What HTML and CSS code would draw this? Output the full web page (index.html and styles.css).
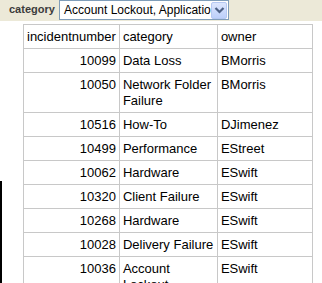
FILE: index.html
```html
<!DOCTYPE html>
<html lang="en">
<head>
    <meta charset="UTF-8">
    <title>Incidents by category</title>
    <link rel="stylesheet" href="styles.css">
</head>
<body>
    <div class="filter-bar">
        <span class="filter-label">category</span>
        <div class="fake-select">
            <span class="fake-select-text">Account Lockout, Application Error, Client Failure</span>
            <span class="fake-select-btn">
                <svg width="11" height="8" viewBox="0 0 11 8">
                    <path d="M1.5 2 L5.5 6 L9.5 2" fill="none" stroke="#4d6185" stroke-width="2.2"/>
                </svg>
            </span>
        </div>
    </div>

    <div class="report">
        <table class="grid">
            <colgroup>
                <col class="c1">
                <col class="c2">
                <col class="c3">
            </colgroup>
            <tr><td>incidentnumber</td><td>category</td><td>owner</td></tr>
            <tr><td class="num">10099</td><td>Data Loss</td><td>BMorris</td></tr>
            <tr><td class="num">10050</td><td>Network Folder Failure</td><td>BMorris</td></tr>
            <tr><td class="num">10516</td><td>How-To</td><td>DJimenez</td></tr>
            <tr><td class="num">10499</td><td>Performance</td><td>EStreet</td></tr>
            <tr><td class="num">10062</td><td>Hardware</td><td>ESwift</td></tr>
            <tr><td class="num">10320</td><td>Client Failure</td><td>ESwift</td></tr>
            <tr><td class="num">10268</td><td>Hardware</td><td>ESwift</td></tr>
            <tr><td class="num">10028</td><td>Delivery Failure</td><td>ESwift</td></tr>
            <tr><td class="num">10036</td><td>Account Lockout</td><td>ESwift</td></tr>
        </table>
    </div>
</body>
</html>
```
FILE: styles.css
```css
body {
    margin: 0;
    font-family: 'Liberation Sans', Arial, sans-serif;
    color: #000;
    background: #fff;
    overflow: hidden;
}

/* Parameter bar */
.filter-bar {
    display: flex;
    align-items: flex-start;
    height: 21px;
    background: #ece9d8;
    padding-left: 9px;
}

.filter-label {
    font-size: 11px;
    font-weight: bold;
    color: #3c3c3c;
    line-height: 19px;
    width: 50px;
}

.fake-select {
    display: flex;
    align-items: center;
    width: 168px;
    height: 18px;
    border: 1px solid #7f9db9;
    background: #fff;
}

.fake-select-text {
    flex: 1;
    overflow: hidden;
    white-space: nowrap;
    font-size: 12px;
    padding-left: 4px;
    color: #000;
}

.fake-select-btn {
    display: flex;
    align-items: center;
    justify-content: center;
    width: 16px;
    height: 17px;
    margin-right: 1px;
    border: 1px solid #b5c8f2;
    border-radius: 2px;
    background: linear-gradient(#dce6fd, #bccffa);
    box-sizing: border-box;
}

/* Report body */
.report {
    position: relative;
    padding: 3px 0 0 23px;
}

.report::before {
    content: '';
    position: absolute;
    left: 0;
    top: 160px;
    bottom: -200px;
    width: 2px;
    background: #000;
}

.grid {
    border-collapse: collapse;
    table-layout: fixed;
    font-size: 13px;
    line-height: 16px;
}

.grid td {
    border: 1px solid #c8c8c8;
    padding: 4px 3px 3px 3px;
    vertical-align: top;
}

.grid .c1 { width: 95px; }
.grid .c2 { width: 98px; }
.grid .c3 { width: 95px; }

.grid td.num {
    text-align: right;
}
```
